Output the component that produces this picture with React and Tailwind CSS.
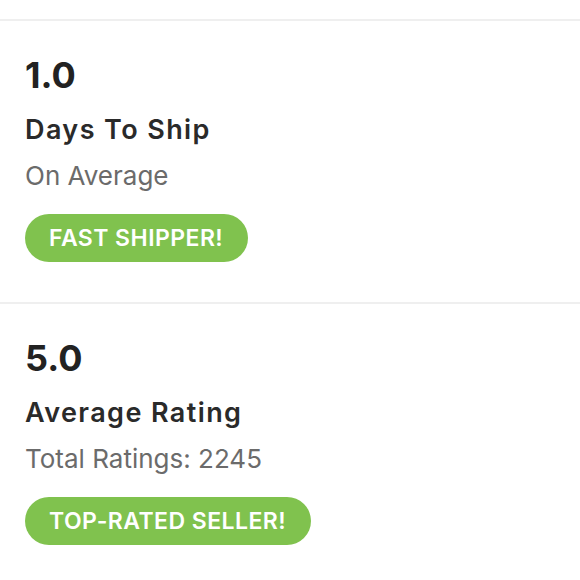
export default function App() {
  const font = { fontFamily: '"Inter", "Liberation Sans", sans-serif' };
  const Section = ({ value, title, sub, badge, first }) => (
    <div className={first ? "pt-[19px]" : "pt-[40px]"}>
      <div className="h-[2px] bg-[#efefef]" />
      <div className="pl-[25px]">
        <div className="mt-[36px] text-[36px] leading-[36px] font-bold text-[#222222]">{value}</div>
        <div className="mt-[24px] text-[27px] leading-[26px] font-semibold tracking-[1.4px] text-[#2a2a2a]">{title}</div>
        <div className="mt-[20px] text-[26px] leading-[26px] text-[#6b6b6b]">{sub}</div>
        <div className="mt-[25px] inline-flex h-[48px] items-center rounded-full bg-[#80c24e] pl-[24px] pr-[25px] text-[23px] font-semibold tracking-[0.45px] text-white">
          {badge}
        </div>
      </div>
    </div>
  );
  return (
    <div className="w-[580px] h-[580px] overflow-hidden bg-white" style={font}>
      <Section first value="1.0" title="Days To Ship" sub="On Average" badge="FAST SHIPPER!" />
      <Section value="5.0" title="Average Rating" sub="Total Ratings: 2245" badge="TOP-RATED SELLER!" />
    </div>
  );
}
